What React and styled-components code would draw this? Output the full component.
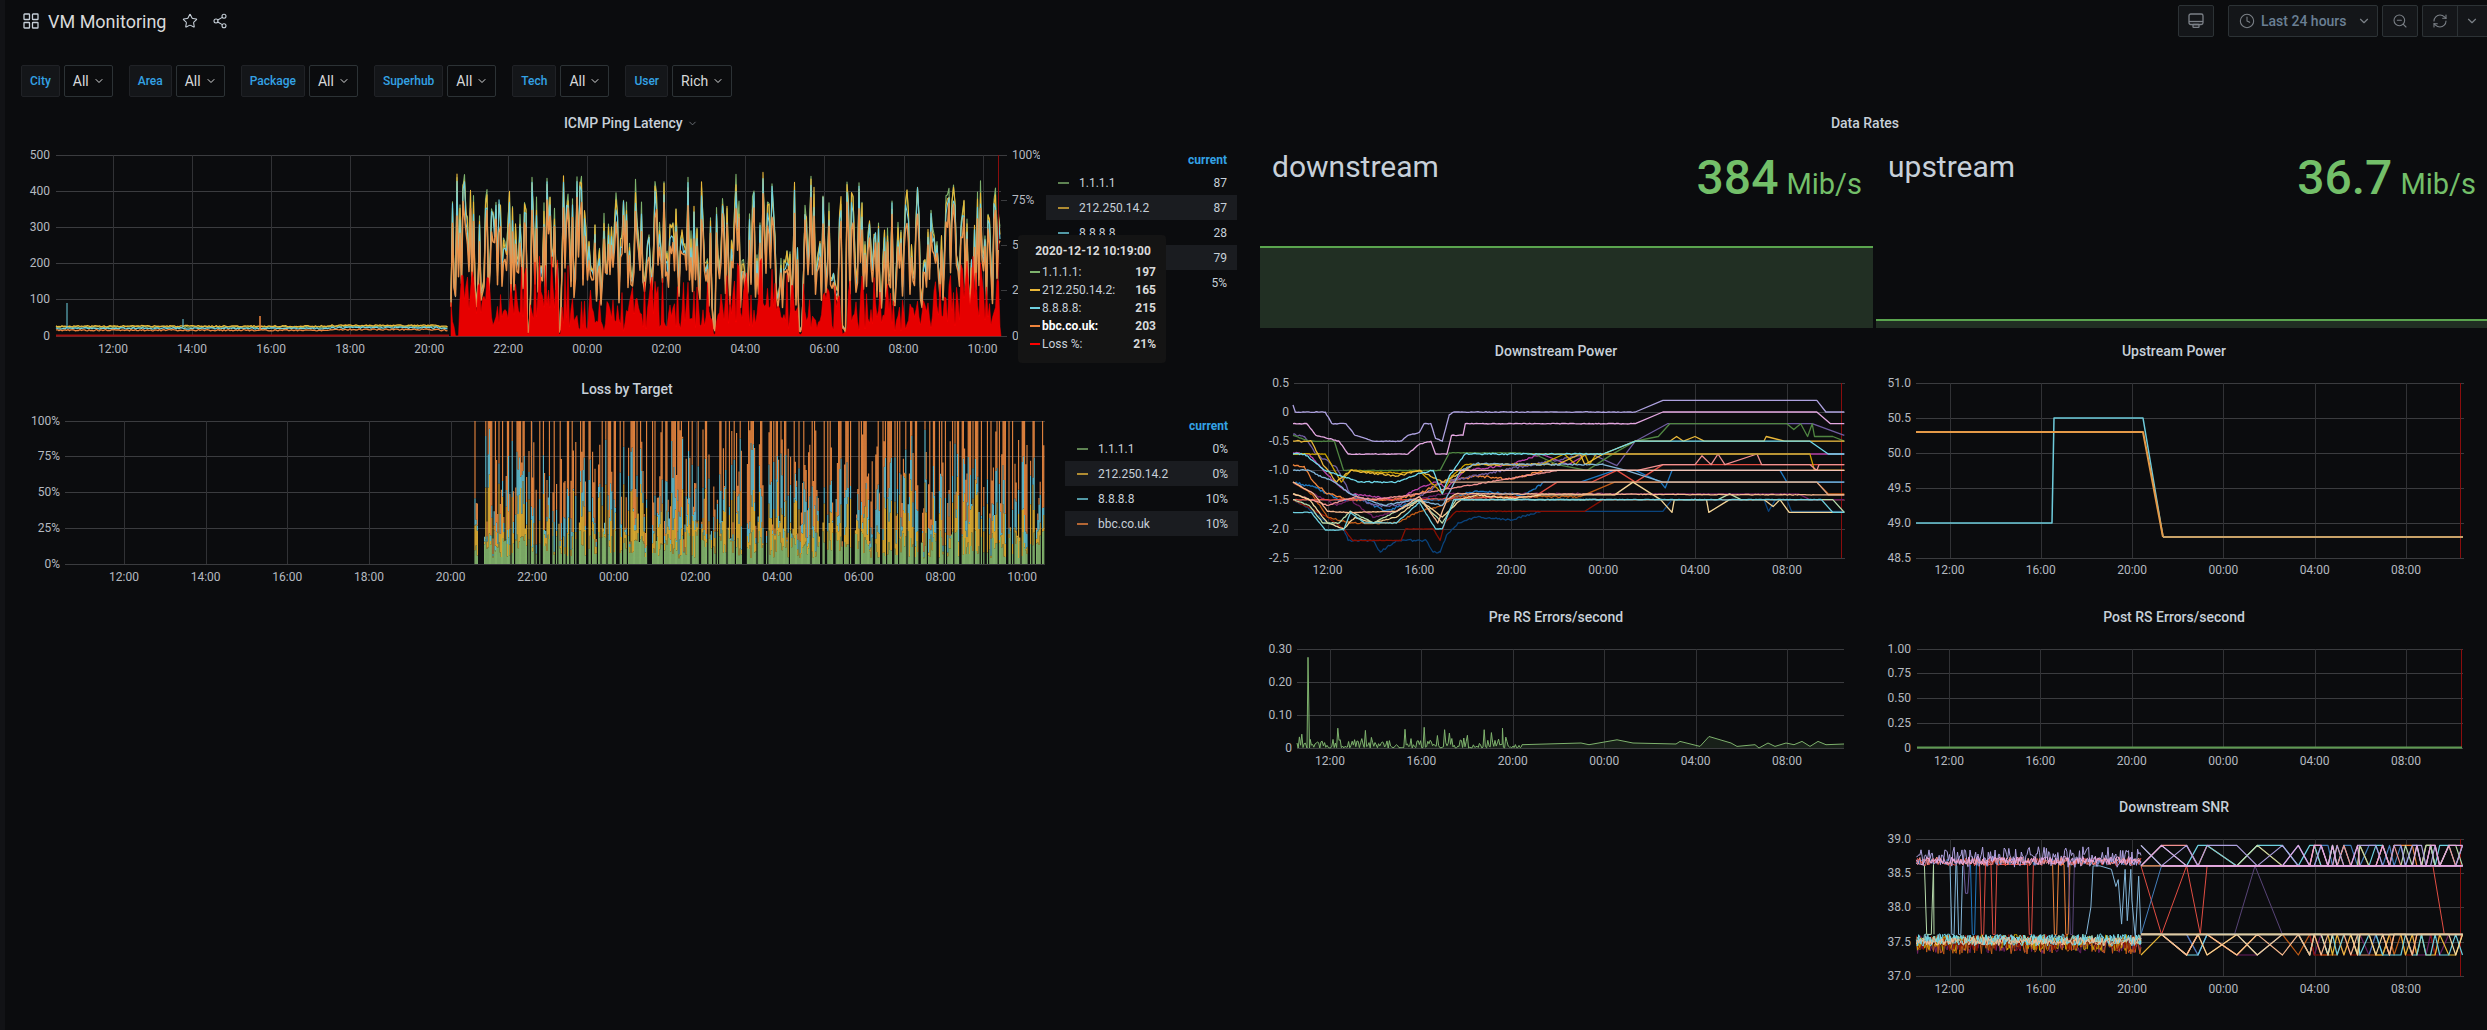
import styled, { createGlobalStyle } from 'styled-components';
import { Star, Share2, Clock, ZoomOut, RefreshCw, ChevronDown } from 'lucide-react';

// grafana's classic series palette
const C = {
  green: '#7EB26D', yellow: '#EAB839', cyan: '#6ED0E0', orange: '#EF843C', red: '#E24D42', blue: '#1F78C1',
  magenta: '#BA43A9', purple: '#705DA0', dgreen: '#508642', dyellow: '#CCA300', dblue: '#447EBC', dorange: '#C15C17',
  dred: '#890F02', navy: '#0A437C', plum: '#6D1F62', dpurple: '#584477', lgreen: '#B7DBAB', lyellow: '#F4D598',
  lcyan: '#70DBED', peach: '#F9BA8F', salmon: '#F29191', lblue: '#82B5D8', pink: '#E5A8E2', lavender: '#AEA2E0',
};

const rng = (seed) => () => {
  seed |= 0; seed = (seed + 0x6d2b79f5) | 0;
  let t = Math.imul(seed ^ (seed >>> 15), 1 | seed);
  t = (t + Math.imul(t ^ (t >>> 7), 61 | t)) ^ t;
  return ((t ^ (t >>> 14)) >>> 0) / 4294967296;
};

const toPath = (pts) => pts.map((p, i) => `${i ? 'L' : 'M'}${p[0].toFixed(1)} ${p[1].toFixed(1)}`).join('');

const variables = [
  ['City', 'All'], ['Area', 'All'], ['Package', 'All'], ['Superhub', 'All'], ['Tech', 'All'], ['User', 'Rich'],
];

const hourTicks = ['12:00', '16:00', '20:00', '00:00', '04:00', '08:00'];
const latencyTicks = ['12:00', '14:00', '16:00', '18:00', '20:00', '22:00', '00:00', '02:00', '04:00', '06:00', '08:00', '10:00'];

const pingLegend = [
  ['1.1.1.1', '87', C.green], ['212.250.14.2', '87', C.yellow], ['8.8.8.8', '28', C.cyan], ['bbc.co.uk', '79', C.orange], ['Loss %', '5%', '#f00'],
];
const lossLegend = [
  ['1.1.1.1', '0%', C.green], ['212.250.14.2', '0%', C.yellow], ['8.8.8.8', '10%', C.cyan], ['bbc.co.uk', '10%', C.orange],
];
const tipRows = [
  ['1.1.1.1:', '197', C.green], ['212.250.14.2:', '165', C.yellow], ['8.8.8.8:', '215', C.cyan], ['bbc.co.uk:', '203', C.orange, true], ['Loss %:', '21%', '#f00'],
];

// ---- latency chart data
const Y0 = 336, YK = 181 / 500;
const valY = (v) => Y0 - v * YK;

function quietBand(color, base, seed) {
  const r = rng(seed), pts = [];
  for (let x = 56; x < 449; x += 1.5) {
    let v = base + r() * 4;
    if (x > 330 && x < 440) v += 2;
    pts.push([x, valY(v)]);
  }
  return toPath(pts);
}

const dips = [[526, 530], [558, 562], [712, 716], [798, 803], [842, 846]];
function latencySeries() {
  const r = rng(7), rows = [[], [], [], []], loss = [[451, Y0]];
  for (let x = 451; x < 1001; x += 1.5) {
    const dip = dips.some((d) => x > d[0] && x < d[1]);
    let v = r() < 0.35 ? 90 + r() * 110 : 190 + r() * 240;
    if (dip) v = 8 + r() * 25;
    rows[0].push([x, valY(Math.min(v * (1 + r() * 0.06), 450))]);
    rows[1].push([x, valY(Math.min(v * (0.95 + r() * 0.12), 452))]);
    rows[2].push([x, valY(v * (0.88 + r() * 0.16))]);
    rows[3].push([x, valY(v * (0.78 + r() * 0.14))]);
    const hump = 0.78 + 0.3 * Math.sin(x / 23) * Math.cos(x / 61);
    let red = (r() < 0.42 ? 20 + r() * 70 : 70 + r() * 150) * hump;
    if (x > 454 && x < 459) red = 0;
    if (dip) red = r() * 10;
    loss.push([x, valY(red)]);
  }
  loss.push([1001, Y0]);
  return { rows: rows.map(toPath), loss: toPath(loss) + 'Z' };
}
const latency = latencySeries();

// ---- loss chart data, stacked columns
const lossGaps = [[478, 484], [550, 553], [586, 588], [618, 620], [650, 652], [742, 747], [833, 836], [880, 882], [1007, 1009]];
function lossColumns() {
  const r = rng(21), seg = [[], [], [], []];
  const B = 564, H = 143;
  for (let x = 475; x < 1045; x += 1.2) {
    if (lossGaps.some((g) => x > g[0] && x < g[1])) continue;
    if (r() < 0.22) continue;
    const total = r() < 0.45 ? H : H * (0.15 + r() * 0.8);
    const a = H * (0.04 + r() * 0.2);
    const b = a + total * r() * 0.45;
    const c = b + total * r() * 0.4;
    const tops = [a, b, c, total];
    let prev = 0;
    tops.forEach((t, i) => {
      const top = Math.min(t, total);
      if (top > prev) seg[i].push(`M${x.toFixed(1)} ${(B - prev).toFixed(1)}V${(B - top).toFixed(1)}`);
      prev = Math.max(prev, top);
    });
  }
  return seg.map((s) => s.join(''));
}
const lossCols = lossColumns();

// ---- small line panels: [color, [[hour, value]...], jitter]
const dsX = (h) => 1327.5 + (h - 12) * 22.97;
const dsY = (v) => 412 - v * 58.4;
const usX = (h) => 1949.5 + (h - 12) * 22.8;

function keyLine(points, jitter, seed, mapX, mapY) {
  const r = rng(seed), out = [];
  points.forEach((p, i) => {
    const next = points[i + 1];
    out.push([mapX(p[0]), mapY(p[1])]);
    if (!next || !jitter || p[0] > 20.5) return;
    for (let h = p[0] + 0.07; h < next[0]; h += 0.07) {
      const k = (h - p[0]) / (next[0] - p[0]);
      const v = p[1] + (next[1] - p[1]) * k + (r() - 0.5) * jitter;
      out.push([mapX(h), mapY(v)]);
    }
  });
  return toPath(out);
}

const dsSeries = [
  [C.navy, [[10.5, -1.5], [11, -1.6], [12, -1.9], [12.7, -2], [12.9, -2.2], [14, -2.2], [14.3, -2.4], [15, -2.2], [16.3, -2.2], [16.6, -2.4], [16.9, -2.4], [17.2, -2.1], [17.7, -1.9], [18.5, -1.8], [20, -1.85], [21.3, -1.7], [26.6, -1.7], [27, -1.5], [31, -1.5], [31.2, -1.7], [31.5, -1.5], [32, -1.5], [32.2, -1.7], [34.5, -1.7]], 0.035],
  [C.dred, [[10.5, -1.5], [12, -1.8], [12.7, -2], [13.1, -2.2], [15.2, -2.2], [15.4, -2], [16.6, -2], [16.9, -2.2], [17.1, -1.9], [17.6, -1.7], [21.3, -1.7], [23.2, -1.7], [24, -1.5], [34.5, -1.5]], 0.01],
  [C.plum, [[10.5, -1.2], [11.4, -1.4], [12.4, -1.6], [13, -1.5], [14, -1.8], [15, -1.7], [16, -1.5], [17, -1.4], [24, -1.4], [32.5, -1.4], [33, -1.5], [34.5, -1.5]], 0.03],
  [C.blue, [[10.5, -1.2], [11.5, -1.3], [12.5, -1.5], [13.5, -1.5], [14.5, -1.7], [16, -1.5], [17, -1.5], [18.5, -1.35], [20.5, -1.42], [21.5, -1.2], [23, -1.2], [24.5, -1], [25.4, -1], [26.5, -1.2], [26.7, -1.3], [27, -1], [31.7, -1], [32, -1.2], [32.1, -1.2], [34.5, -1.2]], 0.04],
  [C.dorange, [[10.5, -1.2], [11.3, -1.4], [12, -1.8], [13, -1.9], [15, -1.9], [16, -1.7], [17, -1.6], [17.5, -1.45], [23, -1.45], [24.5, -1.2], [33.3, -1.2], [33.8, -1.4], [34.5, -1.4]], 0.03],
  [C.magenta, [[10.5, -.7], [11.2, -.72], [12.3, -1.2], [13, -1.4], [15, -1.5], [16, -1.3], [16.7, -1.2], [17.2, -1.3], [18, -1], [20, -.9], [21.3, -.72], [22.5, -.9], [23.3, -.72], [33, -.72], [34.5, -.72]], 0.03],
  [C.orange, [[10.5, -.9], [11, -.95], [11.4, -1.2], [12, -1.4], [13, -1.5], [15, -1.5], [16, -1.4], [17, -1.2], [18.5, -1.1], [20, -1.15], [21.5, -1], [23.5, -1], [24.5, -1], [34.5, -1]], 0.04],
  [C.purple, [[10.5, -.38], [11, -.42], [11.5, -.72], [12.4, -.95], [13, -1.4], [14, -1.6], [15, -1.6], [16, -1.45], [17, -1.2], [22.9, -.75], [23.5, -.72], [24.6, -.92], [25.4, -.5], [26.8, -.2], [33.1, -.2], [34.5, -.4]], 0.04],
  [C.dgreen, [[10.5, -.4], [11.2, -.5], [12.3, -.5], [12.7, -1], [16.9, -1], [17.3, -.7], [20.2, -.7], [21, -.72], [22, -.9], [23.3, -1], [24.5, -.7], [25.4, -.5], [26.4, -.42], [26.9, -.2], [32, -.2], [32.3, -.3], [32.6, -.2], [32.9, -.42], [33.1, -.2], [33.2, -.42], [34, -.42], [34.5, -.5]], 0.01],
  [C.red, [[10.5, -1.5], [12, -1.5], [13, -1.5], [15, -1.5], [21, -1.45], [22, -1.2], [23.5, -1.2], [24.6, -1], [25.4, -1.2], [26.6, -.9], [34.5, -.9]], 0.02],
  [C.dyellow, [[10.5, -.72], [11.9, -.72], [12.6, -1.2], [13, -1], [15.2, -1.05], [16, -1], [17, -1.4], [17.4, -1.1], [18, -.9], [21.3, -.9], [22.3, -.72], [22.8, -.9], [23.2, -.72], [23.4, -.9], [23.7, -.72], [33, -.72], [33.2, -1], [34.5, -1]], 0.02],
  [C.yellow, [[10.5, -.5], [11.3, -.5], [11.8, -.9], [12.4, -1.2], [13, -1], [15, -1.1], [16, -1], [17, -1.2], [18, -1], [18.3, -.9], [22, -.9], [23, -.72], [23.2, -.9], [24, -.72], [25.4, -.5], [26.9, -.5], [27.2, -.42], [27.5, -.5], [28, -.42], [28.4, -.5], [31, -.5], [31.1, -.42], [31.9, -.5], [34.5, -.5]], 0.03],
  [C.pink, [[10.5, -.2], [11.1, -.2], [11.5, -.4], [12.5, -.5], [12.9, -.72], [15.5, -.72], [16, -.55], [16.5, -.5], [16.7, -.72], [17.2, -.72], [17.4, -.4], [17.9, -.4], [18, -.2], [25.4, -.2], [26.6, 0], [33.3, 0], [33.9, -.2], [34.5, -.2]], 0.012],
  [C.lavender, [[10.5, .12], [10.6, 0], [11.9, 0], [12.2, -.2], [12.8, -.2], [13.2, -.4], [14, -.5], [15.2, -.5], [15.5, -.4], [16, -.35], [16.2, -.2], [16.5, -.2], [16.7, -.45], [17, -.5], [17.3, -.05], [17.5, 0], [25.4, 0], [26.6, .2], [33.3, .2], [33.7, 0], [34.5, 0]], 0.012],
  [C.lblue, [[10.5, -1], [11.2, -1], [11.7, -1.1], [12.3, -1.2], [13, -1.4], [14.5, -1.6], [15.7, -1.5], [17, -1.6], [17.8, -1], [18.5, -.88], [20, -.9], [24, -.9], [25, -1], [26.6, -1.2], [33.3, -1.2], [33.8, -1.2], [34.5, -1.2]], 0.025],
  [C.salmon, [[10.5, -1.4], [12, -1.6], [13.2, -1.45], [14, -1.5], [16, -1.4], [22, -1], [25.5, -1], [26.6, -.9], [28, -.9], [28.3, -.75], [28.7, -.9], [29, -.72], [29.3, -.9], [30.7, -.72], [30.9, -.9], [33, -.9], [33.3, -1], [33.4, -.9], [34.5, -.9]], 0.02],
  ['#f3c4b8', [[17.3, -1], [34.5, -1]], 0],
  ['#d9a98c', [[17.3, -1.2], [33.3, -1.2], [33.8, -1.42], [34.5, -1.42]], 0],
  ['#b89a3c', [[20.8, -.72], [33, -.72]], 0],
  [C.lyellow, [[10.5, -1.4], [11.2, -1.5], [12, -1.9], [12.7, -2], [13.2, -1.8], [14, -1.9], [15, -1.8], [16, -1.5], [17, -1.8], [17.8, -1.5], [18.5, -1.42], [20, -1.48], [21.3, -1.42], [24.5, -1.42], [25.3, -1.2], [26.5, -1.5], [27, -1.72], [27.1, -1.5], [28.5, -1.5], [28.6, -1.72], [29.5, -1.5], [31, -1.5], [31.4, -1.62], [31.7, -1.5], [32.1, -1.72], [34.5, -1.72]], 0.02],
  [C.lgreen, [[10.5, -1.5], [11.2, -1.6], [11.8, -1.9], [12.5, -1.9], [13, -1.7], [14, -1.9], [16, -1.5], [17, -1.9], [17.6, -1.5], [24, -1.5], [26.5, -1.5], [28, -1.5], [29, -1.5], [29.5, -1.4], [30, -1.5], [34, -1.5], [34.5, -1.72]], 0.015],
  [C.peach, [[10.5, -1.2], [11.4, -1.4], [12, -1.7], [13, -1.72], [15, -1.7], [16, -1.45], [16.8, -1.9], [17.2, -1.5], [17.6, -1.4], [33.4, -1.42], [33.6, -1.42], [34.5, -1.42]], 0.012],
  [C.cyan, [[10.5, -1.72], [11.3, -1.72], [11.9, -2.02], [12.7, -2.02], [13, -1.72], [13.6, -1.9], [15, -1.9], [16, -1.55], [16.7, -2], [17, -2], [17.5, -1.5], [33.5, -1.5], [34, -1.72], [34.5, -1.72]], 0.012],
  [C.lcyan, [[10.5, -.72], [11, -.72], [11.9, -1], [12.6, -1.1], [13.4, -1.2], [15, -1.2], [16, -1.05], [16.6, -1], [17, -1.4], [17.3, -1.1], [18, -.72], [24, -.72], [25.4, -.5], [33, -.5], [33.8, -.72], [34.5, -.72]], 0.025],
];

// ---- pre rs errors
function preErrors() {
  const r = rng(99), pts = [];
  for (let x = 1297; x < 1522; x += 1.2) {
    if (x > 1306 && x < 1310) continue;
    const spike = r() < 0.08 ? 0.03 + r() * 0.035 : r() * r() * 0.035;
    pts.push([x, 748 - spike * 330]);
  }
  const late = [[1522, .01], [1581, .015], [1589, .01], [1617, .025], [1633, .015], [1676, .012], [1680, .02], [1700, .005], [1709, .035], [1731, .015], [1737, .005], [1755, .01], [1759, 0], [1768, .015], [1775, .005], [1786, .015], [1794, .01], [1802, .02], [1810, .005], [1818, .02], [1826, .01], [1844, .012]];
  late.forEach((p) => pts.push([p[0], 748 - p[1] * 330]));
  pts.push([1307, 748], [1308, 748 - .275 * 330], [1309.5, 748], [1502.5, 748 - .06 * 330]);
  pts.sort((a, b) => a[0] - b[0]);
  return toPath(pts);
}
const preLine = preErrors();

// ---- downstream snr
const snrY = (v) => 907 - (v - 38) * 68.5;
const snrCluster = (color, base, spread, seed) => {
  const r = rng(seed), pts = [];
  for (let h = 10.55; h < 20.45; h += 0.05) pts.push([usX(h), snrY(base + (r() - 0.5) * spread)]);
  return [color, toPath(pts)];
};
const snrNoise = [
  snrCluster(C.plum, 37.45, .26, 1), snrCluster(C.dorange, 37.45, .28, 2), snrCluster(C.dyellow, 37.48, .24, 3),
  snrCluster(C.dred, 37.48, .24, 4), snrCluster(C.lgreen, 37.52, .14, 5), snrCluster(C.cyan, 37.52, .18, 6),
  snrCluster(C.lcyan, 37.52, .16, 7), snrCluster(C.peach, 37.5, .12, 8),
  snrCluster(C.dblue, 38.66, .1, 9), snrCluster(C.red, 38.66, .12, 10), snrCluster(C.lavender, 38.73, .3, 11),
  snrCluster(C.salmon, 38.67, .12, 12), snrCluster(C.pink, 38.68, .12, 13),
];
const drop = (h, a = 38.62, b = 37.6) => [[h - .08, a], [h, b], [h + .1, b], [h + .18, a]];
const snrDrops = [
  [C.lgreen, [[10.9, 38.62], [11, 37.6], [11.2, 37.6], [11.3, 38.62], [11.32, 37.6]]],
  [C.lblue, [...drop(12.1), ...drop(12.4, 38.6, 37.6)]],
  [C.purple, drop(12.7, 38.62, 38.2)],
  [C.blue, drop(13.0)],
  [C.red, [...drop(13.4), ...drop(13.9), ...drop(15.5)]],
  [C.orange, [...drop(16.6), ...drop(17.1)]],
  [C.dpurple, drop(17.3)],
  [C.lblue, [[18, 37.6], [18.2, 38], [18.3, 38.6], [18.6, 38.6], [19.1, 38.55], [19.3, 38.3], [19.4, 38.4], [19.55, 37.75], [19.7, 38.55], [19.8, 37.8], [19.95, 38.55], [20, 38.1], [20.15, 37.55], [20.3, 38.45], [20.4, 37.6]]],
];
const samples = [20.4, 21.3, 22.4, 22.9, 23.3, 24.6, 25.5, 26.6, 27.3, 27.8, 28, 28.3, 28.6, 28.8, 29, 29.3, 29.6, 29.9, 30, 30.4, 30.7, 31, 31.3, 31.5, 31.8, 32, 32.3, 32.5, 32.7, 32.9, 33.1, 33.3, 33.5, 33.9, 34.2, 34.5];
const zigzag = (lo, hi, seed, chance) => {
  const r = rng(seed);
  return samples.map((h) => [usX(h), snrY(r() < chance ? hi : lo)]);
};
const snrZig = [
  [C.plum, zigzag(37.6, 37.3, 31, .35)], [C.dred, zigzag(37.6, 37.3, 32, .3)], [C.dblue, zigzag(37.6, 37.3, 33, .3)],
  [C.dorange, zigzag(37.6, 37.3, 34, .3)], [C.yellow, zigzag(37.6, 37.3, 35, .3)], [C.cyan, zigzag(37.6, 37.3, 36, .35)],
  [C.lyellow, zigzag(37.6, 37.3, 37, .3)], [C.peach, zigzag(37.6, 37.3, 38, .35)],
  [C.dblue, zigzag(38.6, 38.9, 41, .35)], [C.orange, zigzag(38.6, 38.9, 42, .3)], [C.cyan, zigzag(38.6, 38.9, 43, .35)],
  [C.salmon, zigzag(38.6, 38.9, 44, .35)], [C.lgreen, zigzag(38.6, 38.9, 45, .3)], [C.lavender, zigzag(38.6, 38.9, 46, .45)], [C.pink, zigzag(38.6, 38.9, 47, .35)],
];
const snrCross = [
  [C.red, [[20.4, 38.6], [21.3, 37.6], [22.4, 38.6], [23, 37.6], [23.3, 38.6], [33.2, 38.6], [33.7, 37.6]]],
  [C.dpurple, [[24.5, 37.6], [25.4, 38.6], [26.6, 37.6]]],
  [C.dblue, [[20.4, 37.6], [21.3, 38.6]]],
];

function Grid({ left, right, top, bottom, xTicks, yTicks, yLabelX, xLabelY, marker }) {
  return (
    <>
      {yTicks.map(([label, y]) => (
        <g key={label}>
          <HLine x1={left} x2={right} y1={y + 0.5} y2={y + 0.5} />
          <text x={yLabelX} y={y} dy="0.35em" textAnchor="end">{label}</text>
        </g>
      ))}
      {xTicks.map(([label, x]) => (
        <g key={label}>
          <VLine x1={x + 0.5} x2={x + 0.5} y1={top} y2={bottom} />
          <text x={x} y={xLabelY} dy="0.35em" textAnchor="middle">{label}</text>
        </g>
      ))}
      {marker && <TimeLine x1={marker + 0.5} x2={marker + 0.5} y1={top} y2={bottom} />}
    </>
  );
}

const Plot = ({ x, y, w, h, children }) => (
  <ChartSvg width={w} height={h} viewBox={`${x} ${y} ${w} ${h}`}>{children}</ChartSvg>
);

function Legend({ rows, width, padLeft }) {
  return (
    <LegendBox $width={width}>
      <LegendHead>current</LegendHead>
      {rows.map(([name, value, color], i) => (
        <LegendRow key={name} $odd={i % 2 === 1} $padLeft={padLeft}>
          <Swatch $color={color} />
          <LegendName>{name}</LegendName>
          <LegendValue>{value}</LegendValue>
        </LegendRow>
      ))}
    </LegendBox>
  );
}

function Stat({ name, value, lineTop }) {
  return (
    <StatBox>
      <StatHead>
        <StatName>{name}</StatName>
        <StatValue>{value}<StatUnit>Mib/s</StatUnit></StatValue>
      </StatHead>
      <SparkSvg height="82" viewBox="0 0 100 82" preserveAspectRatio="none">
        <rect x="0" y={lineTop} width="100" height={82 - lineTop} fill="#212f23" />
        <line x1="0" x2="100" y1={lineTop + 1} y2={lineTop + 1} stroke="#5aa54e" strokeWidth="2" />
      </SparkSvg>
    </StatBox>
  );
}

export default function App() {
  return (
    <Page>
      <GlobalStyle />
      <SideStrip />
      <Main>
        <NavBar>
          <TitleGroup>
            <svg width="16" height="16" viewBox="0 0 16 16" fill="none" stroke="#c7d0d9" strokeWidth="1.3">
              <rect x="1" y="1" width="5.5" height="5.5" rx="0.6" />
              <rect x="9.5" y="1" width="5.5" height="5.5" rx="0.6" />
              <rect x="1" y="9.5" width="5.5" height="5.5" rx="0.6" />
              <rect x="9.5" y="9.5" width="5.5" height="5.5" rx="0.6" />
            </svg>
            <DashName>VM Monitoring</DashName>
            <Star size={16} strokeWidth={1.6} />
            <Share2 size={16} strokeWidth={1.6} />
          </TitleGroup>
          <NavActions>
            <NavButton>
              <svg width="16" height="16" viewBox="0 0 16 16" fill="none" stroke="currentColor" strokeWidth="1.3">
                <rect x="1" y="1" width="14" height="10.5" rx="1.8" />
                <line x1="1" x2="15" y1="8.5" y2="8.5" />
                <rect x="5" y="11.5" width="6" height="2.8" rx="0.6" />
              </svg>
            </NavButton>
            <TimePicker>
              <Clock size={16} strokeWidth={1.6} />
              <span>Last 24 hours</span>
              <ChevronDown size={14} />
            </TimePicker>
            <NavButton>
              <ZoomOut size={16} strokeWidth={1.6} />
            </NavButton>
            <RefreshGroup>
              <RefreshPart $wide>
                <RefreshCw size={16} strokeWidth={1.6} />
              </RefreshPart>
              <RefreshPart>
                <ChevronDown size={14} />
              </RefreshPart>
            </RefreshGroup>
          </NavActions>
        </NavBar>

        <VarRow>
          {variables.map(([label, value]) => (
            <VarGroup key={label}>
              <VarLabel>{label}</VarLabel>
              <VarValue>{value}<ChevronDown size={12} /></VarValue>
            </VarGroup>
          ))}
        </VarRow>

        <Dashboard>
          <div>
            <Panel>
              <PanelTitle $pr={3}>ICMP Ping Latency <ChevronDown size={11} color="#6f7479" /></PanelTitle>
              <PanelBody $pr={23}>
                <Plot x={5} y={134} w={1035} h={244}>
                  <Grid left={56} right={1001} top={155} bottom={336} yLabelX={50} xLabelY={349}
                    xTicks={latencyTicks.map((t, i) => [t, 113 + i * 79.05])}
                    yTicks={[['500', 155], ['400', 191], ['300', 227], ['200', 263], ['100', 299], ['0', 336]]}
                    marker={998} />
                  {[['100%', 155], ['75%', 200], ['50%', 245], ['25%', 290], ['0', 336]].map(([t, y]) => (
                    <g key={t}>
                      <HLine x1={1001} x2={1007} y1={y + 0.5} y2={y + 0.5} />
                      <text x={1012} y={y} dy="0.35em">{t}</text>
                    </g>
                  ))}
                  <DataLine d={quietBand(C.green, 23, 2)} stroke={C.green} strokeWidth="1.3" />
                  <DataLine d={quietBand(C.yellow, 25, 3)} stroke={C.yellow} strokeWidth="1.3" />
                  <DataLine d={quietBand(C.cyan, 19, 4)} stroke={C.cyan} strokeWidth="1.3" />
                  <DataLine d={quietBand(C.orange, 14, 5)} stroke={C.orange} strokeWidth="1.3" />
                  <DataLine d="M67 327V303" stroke={C.cyan} />
                  <DataLine d="M183 327V319" stroke={C.cyan} />
                  <DataLine d="M260 329V316" stroke={C.orange} strokeWidth="1.5" />
                  {latency.rows.map((d, i) => (
                    <DataLine key={i} d={d} stroke={[C.green, C.yellow, C.cyan, '#E8924A'][i]} strokeWidth={i === 3 ? 1.5 : 1.1} />
                  ))}
                  <path d={latency.loss} fill="#e60000" stroke="#ff0000" strokeWidth="0.5" />
                  <DataLine d="M56 335.5H449" stroke="#a01010" strokeWidth="2" />
                  <TimeLine x1="998.5" x2="998.5" y1="155" y2="250" />
                </Plot>
                <Legend rows={pingLegend} width={191} padLeft={12} />
              </PanelBody>
              <Tooltip>
                <TipTime>2020-12-12 10:19:00</TipTime>
                {tipRows.map(([name, value, color, active]) => (
                  <TipRow key={name} $active={active}>
                    <TipSwatch $color={color} />
                    <span>{name}</span>
                    <TipValue>{value}</TipValue>
                  </TipRow>
                ))}
              </Tooltip>
            </Panel>
            <Panel>
              <PanelTitle $pr={11}>Loss by Target</PanelTitle>
              <PanelBody $pr={22}>
                <Plot x={5} y={400} w={1055} h={200}>
                  <Grid left={65} right={1045} top={421} bottom={564} yLabelX={60} xLabelY={577}
                    xTicks={latencyTicks.map((t, i) => [t, 124 + i * 81.65])}
                    yTicks={[['100%', 421], ['75%', 456], ['50%', 492], ['25%', 528], ['0%', 564]]} />
                  {lossCols.map((d, i) => (
                    <path key={i} d={d} fill="none" strokeWidth="1.1" stroke={['#86b86f', '#dfae33', '#62bdcf', '#e5853f'][i]} />
                  ))}
                </Plot>
                <Legend rows={lossLegend} width={173} padLeft={12} />
              </PanelBody>
            </Panel>
          </div>

          <div>
            <Panel>
              <PanelTitle $pr={17}>Data Rates</PanelTitle>
              <StatRow>
                <Stat name="downstream" value="384" lineTop={0} />
                <Stat name="upstream" value="36.7" lineTop={73} />
              </StatRow>
            </Panel>
            <ChartGrid>
              <Panel>
                <PanelTitle $pr={21}>Downstream Power</PanelTitle>
                <Plot x={1260} y={362} w={613} h={244}>
                  <Grid left={1294} right={1845} top={383} bottom={558} yLabelX={1289} xLabelY={570}
                    xTicks={hourTicks.map((t, i) => [t, 1327.5 + i * 91.9])}
                    yTicks={[['0.5', 383], ['0', 412], ['-0.5', 441], ['-1.0', 470], ['-1.5', 500], ['-2.0', 529], ['-2.5', 558]]}
                    marker={1841} />
                  {dsSeries.map(([color, pts, jitter], i) => (
                    <DataLine key={i} d={keyLine(pts, jitter, i + 50, dsX, dsY)} stroke={color} strokeWidth="1.3" />
                  ))}
                </Plot>
              </Panel>
              <Panel>
                <PanelTitle $pr={15}>Upstream Power</PanelTitle>
                <Plot x={1876} y={362} w={611} h={244}>
                  <Grid left={1916} right={2464} top={383} bottom={558} yLabelX={1911} xLabelY={570}
                    xTicks={hourTicks.map((t, i) => [t, 1949.5 + i * 91.3])}
                    yTicks={[['51.0', 383], ['50.5', 418], ['50.0', 453], ['49.5', 488], ['49.0', 523], ['48.5', 558]]}
                    marker={2460} />
                  <DataLine d="M1916 523H2052L2054 418H2143L2163 537" stroke="#6ecbdb" strokeWidth="1.5" />
                  <DataLine d="M1916 432H2143L2163 537" stroke="#e59a48" strokeWidth="2" />
                  <DataLine d="M2163 537H2463" stroke="#c9a268" strokeWidth="2" />
                </Plot>
              </Panel>
              <Panel>
                <PanelTitle $pr={21}>Pre RS Errors/second</PanelTitle>
                <Plot x={1260} y={628} w={613} h={168}>
                  <Grid left={1297} right={1844} top={649} bottom={748} yLabelX={1292} xLabelY={761}
                    xTicks={hourTicks.map((t, i) => [t, 1330 + i * 91.4])}
                    yTicks={[['0.30', 649], ['0.20', 682], ['0.10', 715], ['0', 748]]} />
                  <path d={`${preLine}L1844 748L1297 748Z`} fill="#7EB26D" fillOpacity="0.12" />
                  <DataLine d={preLine} stroke="#7EB26D" />
                </Plot>
              </Panel>
              <Panel>
                <PanelTitle $pr={15}>Post RS Errors/second</PanelTitle>
                <Plot x={1876} y={628} w={611} h={168}>
                  <Grid left={1917} right={2463} top={649} bottom={748} yLabelX={1911} xLabelY={761}
                    xTicks={hourTicks.map((t, i) => [t, 1949 + i * 91.4])}
                    yTicks={[['1.00', 649], ['0.75', 673], ['0.50', 698], ['0.25', 723], ['0', 748]]}
                    marker={2461} />
                  <DataLine d="M1917 747.5H2462" stroke="#5f9a52" strokeWidth="2" />
                </Plot>
              </Panel>
              <Panel $col={2}>
                <PanelTitle $pr={15}>Downstream SNR</PanelTitle>
                <Plot x={1876} y={818} w={611} h={212}>
                  <Grid left={1916} right={2464} top={839} bottom={976} yLabelX={1911} xLabelY={989}
                    xTicks={hourTicks.map((t, i) => [t, 1949.5 + i * 91.3])}
                    yTicks={[['39.0', 839], ['38.5', 873], ['38.0', 907], ['37.5', 942], ['37.0', 976]]}
                    marker={2460} />
                  {snrDrops.map(([color, pts], i) => (
                    <DataLine key={i} d={toPath(pts.map((p) => [usX(p[0]), snrY(p[1])]))} stroke={color} />
                  ))}
                  {snrCross.map(([color, pts], i) => (
                    <DataLine key={i} d={toPath(pts.map((p) => [usX(p[0]), snrY(p[1])]))} stroke={color} />
                  ))}
                  {snrZig.map(([color, pts], i) => (
                    <DataLine key={i} d={toPath(pts)} stroke={color} strokeWidth="1.2" />
                  ))}
                  {snrNoise.map(([color, d], i) => (
                    <DataLine key={i} d={d} stroke={color} />
                  ))}
                  <DataLine d={`M${usX(21.3)} ${snrY(38.6)}H2463`} stroke={C.pink} strokeWidth="1.6" />
                  <DataLine d={`M${usX(20.4)} ${snrY(37.6)}L${usX(21.3)} ${snrY(37.6)}H2463`} stroke="#dccaa4" strokeWidth="2" />
                </Plot>
              </Panel>
            </ChartGrid>
          </div>
        </Dashboard>
      </Main>
    </Page>
  );
}

const GlobalStyle = createGlobalStyle`
  html, body {
    margin: 0;
    padding: 0;
    background: #0b0c0e;
  }
  body {
    font-family: Roboto, 'Liberation Sans', sans-serif;
    color: #c7d0d9;
  }
`

const Page = styled.div`
  display: flex;
  width: 2487px;
  height: 1030px;
  overflow: hidden;
  background: #0b0c0e;
`

const SideStrip = styled.div`
  width: 5px;
  flex: none;
  background: #121316;
`

const Main = styled.div`
  flex: 1;
  min-width: 0;
  display: flex;
  flex-direction: column;
`

const NavBar = styled.div`
  height: 42px;
  padding-top: 5px;
  box-sizing: border-box;
  display: flex;
  justify-content: space-between;
  align-items: flex-start;
`

const TitleGroup = styled.div`
  height: 32px;
  padding-left: 18px;
  display: flex;
  align-items: center;
  color: #c7d0d9;

  svg:nth-of-type(3) {
    margin-left: 14px;
  }
`

const DashName = styled.div`
  font-size: 18px;
  color: #d8d9da;
  margin: 0 16px 0 9px;
`

const NavActions = styled.div`
  display: flex;
  gap: 4px;
  color: #7b8087;
`

const NavButton = styled.div`
  width: 36px;
  height: 32px;
  box-sizing: border-box;
  display: flex;
  align-items: center;
  justify-content: center;
  background: #141619;
  border: 1px solid #2c3235;
  border-radius: 2px;

  &:first-child {
    margin-right: 10px;
  }
`

const TimePicker = styled.div`
  width: 150px;
  height: 32px;
  box-sizing: border-box;
  padding: 0 6px 0 10px;
  display: flex;
  align-items: center;
  background: #141619;
  border: 1px solid #2c3235;
  border-radius: 2px;
  font-size: 14px;
  font-weight: 500;
  color: #6a7f94;

  svg {
    color: #7b8087;
    flex: none;
  }
  span {
    margin-left: 6px;
    flex: 1;
  }
`

const RefreshGroup = styled.div`
  width: 65px;
  height: 32px;
  box-sizing: border-box;
  display: flex;
  background: #141619;
  border: 1px solid #2c3235;
  border-right: none;
  border-radius: 2px 0 0 2px;
`

const RefreshPart = styled.div`
  width: ${(p) => (p.$wide ? '35px' : '30px')};
  display: flex;
  align-items: center;
  justify-content: center;
  border-right: ${(p) => (p.$wide ? '1px solid #2c3235' : 'none')};
`

const VarRow = styled.div`
  margin-top: 23px;
  padding-left: 16px;
  display: flex;
  gap: 16px;
`

const VarGroup = styled.div`
  display: flex;
  gap: 4px;
`

const VarLabel = styled.div`
  height: 32px;
  box-sizing: border-box;
  padding: 0 8px;
  display: flex;
  align-items: center;
  background: #141619;
  border: 1px solid #202226;
  border-radius: 2px;
  font-size: 12px;
  font-weight: 500;
  color: #33a2e5;
`

const VarValue = styled.div`
  height: 32px;
  box-sizing: border-box;
  padding: 0 7px 0 8px;
  display: flex;
  align-items: center;
  gap: 4px;
  background: #0b0c0e;
  border: 1px solid #2c3235;
  border-radius: 2px;
  font-size: 14px;
  color: #d8d9da;
`

const Dashboard = styled.div`
  margin-top: 15px;
  display: grid;
  grid-template-columns: 1255px 1227px;
`

const Panel = styled.div`
  position: relative;
  grid-column: ${(p) => p.$col || 'auto'};
`

const PanelTitle = styled.div`
  height: 22px;
  line-height: 22px;
  padding-right: ${(p) => p.$pr || 0}px;
  text-align: center;
  font-size: 14px;
  font-weight: 500;
  color: #c7d0d9;

  svg {
    vertical-align: -1px;
    margin-left: 1px;
  }
`

const PanelBody = styled.div`
  display: flex;
  justify-content: space-between;
  padding-right: ${(p) => p.$pr}px;
`

const ChartSvg = styled.svg`
  display: block;
  flex: none;

  text {
    font-family: Roboto, 'Liberation Sans', sans-serif;
    font-size: 12px;
    fill: #b5bac0;
  }
`

const HLine = styled.line`
  stroke: #3b3c3f;
  stroke-width: 1;
  shape-rendering: crispEdges;
`

const VLine = styled.line`
  stroke: #313235;
  stroke-width: 1;
  shape-rendering: crispEdges;
`

const TimeLine = styled.line`
  stroke: #8a0d0d;
  stroke-width: 1;
  shape-rendering: crispEdges;
`

const DataLine = styled.path`
  fill: none;
  stroke-width: ${(p) => p.strokeWidth || 1};
  stroke-linejoin: round;
`

const LegendBox = styled.div`
  width: ${(p) => p.$width}px;
  flex: none;
  font-size: 12px;
`

const LegendHead = styled.div`
  height: 36px;
  box-sizing: border-box;
  padding: 0 10px 3px 0;
  display: flex;
  align-items: flex-end;
  justify-content: flex-end;
  font-weight: 700;
  color: #33a2e5;
`

const LegendRow = styled.div`
  height: 25px;
  box-sizing: border-box;
  padding: 0 10px 0 ${(p) => p.$padLeft}px;
  display: flex;
  align-items: center;
  background: ${(p) => (p.$odd ? '#1a1c20' : 'transparent')};
`

const Swatch = styled.div`
  width: 11px;
  height: 2px;
  flex: none;
  margin-right: 10px;
  background: ${(p) => p.$color};
  opacity: 0.72;
`

const LegendName = styled.div`
  flex: 1;
  color: #c7d0d9;
`

const LegendValue = styled.div`
  color: #c7d0d9;
`

const Tooltip = styled.div`
  position: absolute;
  left: 1013px;
  top: 123px;
  width: 148px;
  height: 128px;
  box-sizing: border-box;
  padding: 7px 10px 0 12px;
  background: #141414;
  border-radius: 4px;
  font-size: 12px;
  color: #c7d0d9;
  z-index: 2;
`

const TipTime = styled.div`
  height: 18px;
  line-height: 18px;
  margin-bottom: 3px;
  text-align: center;
  font-weight: 700;
  color: #d8d9da;
`

const TipRow = styled.div`
  height: 18px;
  display: flex;
  align-items: center;
  font-weight: ${(p) => (p.$active ? 700 : 400)};
  color: ${(p) => (p.$active ? '#ffffff' : '#c7d0d9')};
`

const TipSwatch = styled.div`
  width: 10px;
  height: 2px;
  flex: none;
  margin-right: 2px;
  background: ${(p) => p.$color};
`

const TipValue = styled.div`
  margin-left: auto;
  font-weight: 700;
  color: #d8d9da;
`

const StatRow = styled.div`
  display: grid;
  grid-template-columns: 613px 611px;
  gap: 3px;
  margin-bottom: 12px;
`

const StatBox = styled.div`
  height: 194px;
  display: flex;
  flex-direction: column;
  justify-content: space-between;
`

const StatHead = styled.div`
  display: flex;
  justify-content: space-between;
  align-items: flex-start;
  padding: 15px 11px 0 12px;
`

const StatName = styled.div`
  font-size: 30px;
  line-height: 36px;
  color: #c7d0d9;
`

const StatValue = styled.div`
  margin-top: 5px;
  font-size: 48px;
  line-height: 48px;
  font-weight: 500;
  color: #73bf69;
`

const StatUnit = styled.span`
  margin-left: 8px;
  font-size: 29px;
  font-weight: 400;
`

const SparkSvg = styled.svg`
  display: block;
  width: 100%;
  flex: none;
`

const ChartGrid = styled.div`
  display: grid;
  grid-template-columns: 613px 611px;
  gap: 0 3px;
  grid-template-rows: 266px 190px 234px;
`
